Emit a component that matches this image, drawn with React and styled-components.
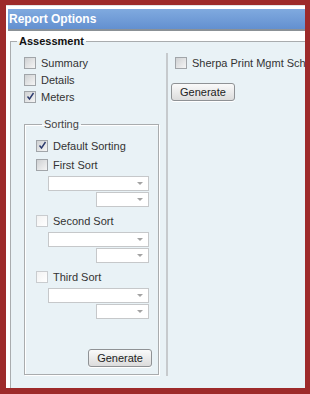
import styled, { createGlobalStyle } from "styled-components";

const GlobalStyle = createGlobalStyle`
  html, body {
    margin: 0;
    padding: 0;
    background: #9d2a2a;
  }
  body {
    font-family: "Liberation Sans", Arial, sans-serif;
    font-size: 11px;
    color: #333;
  }
`;

const Frame = styled.div`
  margin: 5px 0 0 6px;
  width: 299px;
  height: 383px;
  overflow: hidden;
  background: #fff;
  border-top: 1px solid #e4e4e4;
  box-sizing: border-box;
  padding: 3px 0 0 2px;
`;

const Header = styled.div`
  height: 20px;
  width: 400px;
  display: flex;
  align-items: center;
  padding-left: 1px;
  background: linear-gradient(#80aadf, #6390d0);
  border-bottom: 2px solid #8b9196;
  color: #fff;
  font-weight: bold;
  font-size: 12px;
`;

const Group = styled.fieldset`
  margin: 4px 0 0 2px;
  padding: 5px 0 0 0;
  width: 420px;
  min-height: 400px;
  border: 1px solid #a9acae;
  background: #e9f2f6;
  box-sizing: border-box;
`;

const Legend = styled.legend`
  margin-left: 6px;
  padding: 0 2px;
  line-height: 13px;
  font-size: 11px;
  font-weight: ${(p) => (p.$bold ? "bold" : "normal")};
  color: ${(p) => (p.$bold ? "#111" : "#444")};
`;

const Columns = styled.div`
  display: flex;
  align-items: flex-start;
`;

const LeftCol = styled.div`
  width: 155px;
  box-sizing: border-box;
  padding: 1px 8px 3px 13px;
  display: flex;
  flex-direction: column;
`;

const RightCol = styled.div`
  flex: 1;
  align-self: stretch;
  border-left: 2px solid #c6cacd;
  padding: 1px 0 0 3px;
  display: flex;
  flex-direction: column;
  align-items: flex-start;
  margin-bottom: 2px;
`;

const Row = styled.label`
  display: flex;
  align-items: center;
  height: ${(p) => p.$h || 17}px;
  margin-left: ${(p) => p.$indent || 0}px;
  white-space: nowrap;
  color: #333;
`;

const Box = styled.span`
  width: 12px;
  height: 12px;
  box-sizing: border-box;
  flex: none;
  display: flex;
  align-items: center;
  justify-content: center;
  border: 1px solid ${(p) => (p.$light ? "#c9cccf" : "#a1a5a9")};
  background: ${(p) =>
    p.$light
      ? "linear-gradient(135deg, #f2f2f2, #ffffff)"
      : "linear-gradient(135deg, #cfd1d3, #f5f5f5)"};
  margin-right: 5px;
`;

const SortBox = styled.fieldset`
  margin: 13px 0 0 0;
  padding: 5px 6px 7px 11px;
  border: 1px solid #a9acae;
  box-shadow: inset 1px 1px 0 #fff, 1px 1px 0 #fff;
  display: flex;
  flex-direction: column;
`;

const Selects = styled.div`
  display: flex;
  flex-direction: column;
  align-items: flex-end;
  gap: 1px;
  margin: 2px 3px 4px 12px;
`;

const Select = styled.div`
  width: ${(p) => p.$w}px;
  height: 15px;
  box-sizing: border-box;
  background: #fff;
  border: 1px solid #c6c8ca;
  display: flex;
  align-items: center;
  justify-content: flex-end;
  padding-right: 5px;
`;

const Arrow = styled.span`
  width: 0;
  height: 0;
  border-left: 3px solid transparent;
  border-right: 3px solid transparent;
  border-top: 3px solid #a3a3a3;
`;

const Actions = styled.div`
  display: flex;
  justify-content: flex-end;
  margin-top: ${(p) => p.$top}px;
`;

const Button = styled.button`
  height: 18px;
  padding: 0 8px;
  font-family: "Liberation Sans", Arial, sans-serif;
  font-size: 11px;
  color: #222;
  border: 1px solid #8f9295;
  border-radius: 3px;
  background: linear-gradient(#fafafa, #dcdcdc);
  box-shadow: 0 1px 0 #fff;
  line-height: 16px;
`;

function Check({ checked, light }) {
  return (
    <Box $light={light}>
      {checked && (
        <svg width="9" height="9" viewBox="0 0 9 9">
          <path d="M1.5 4.5 L3.5 7 L7.5 1" fill="none" stroke="#2c3b6e" strokeWidth="1.4" />
        </svg>
      )}
    </Box>
  );
}

function SortSelect() {
  return (
    <Selects>
      <Select $w={101}>
        <Arrow />
      </Select>
      <Select $w={53}>
        <Arrow />
      </Select>
    </Selects>
  );
}

export default function App() {
  return (
    <>
      <GlobalStyle />
      <Frame>
        <Header>Report Options</Header>
        <Group>
          <Legend $bold>Assessment</Legend>
          <Columns>
            <LeftCol>
              <Row>
                <Check />
                Summary
              </Row>
              <Row>
                <Check />
                Details
              </Row>
              <Row>
                <Check checked />
                Meters
              </Row>

              <SortBox>
                <Legend>Sorting</Legend>
                <Row $h={19}>
                  <Check checked />
                  Default Sorting
                </Row>
                <Row $h={19}>
                  <Check />
                  First Sort
                </Row>
                <SortSelect />
                <Row $h={19}>
                  <Check light />
                  Second Sort
                </Row>
                <SortSelect />
                <Row $h={19}>
                  <Check light />
                  Third Sort
                </Row>
                <SortSelect />
                <Actions $top={26}>
                  <Button>Generate</Button>
                </Actions>
              </SortBox>
            </LeftCol>
            <RightCol>
              <Row $indent={4}>
                <Check />
                Sherpa Print Mgmt Schedule
              </Row>
              <Actions $top={12}>
                <Button>Generate</Button>
              </Actions>
            </RightCol>
          </Columns>
        </Group>
      </Frame>
    </>
  );
}
